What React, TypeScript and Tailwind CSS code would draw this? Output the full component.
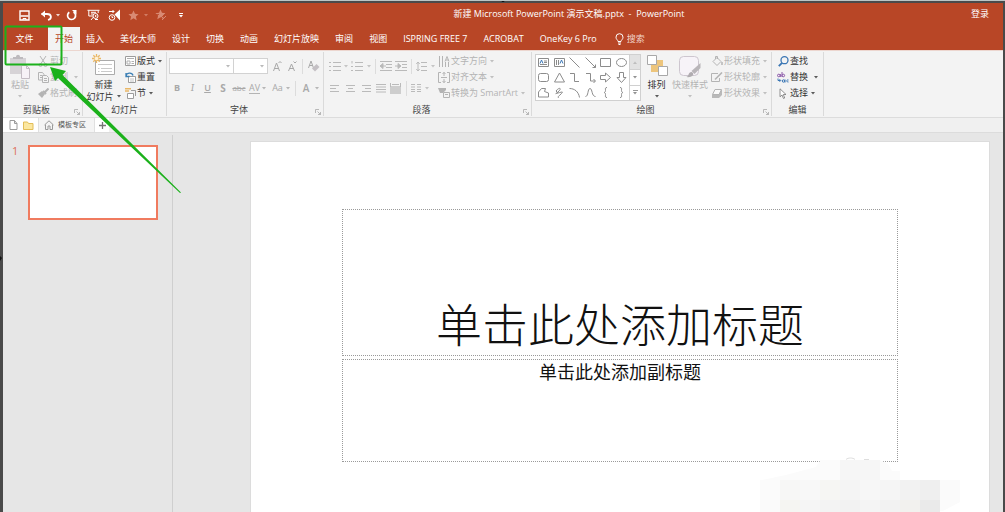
import type { ReactNode } from "react"

type IconProps = { w?: number; h?: number; className?: string; children: ReactNode }

function Icon({ w = 12, h = 12, className = "", children }: IconProps) {
  return (
    <svg
      width={w}
      height={h}
      viewBox={`0 0 ${w} ${h}`}
      fill="none"
      stroke="currentColor"
      className={`shrink-0 ${className}`}
      aria-hidden="true"
    >
      {children}
    </svg>
  )
}

function Caret({ className = "" }: { className?: string }) {
  return (
    <svg width="4" height="3" viewBox="0 0 4 3" className={`shrink-0 opacity-80 ${className}`} aria-hidden="true">
      <path d="M0 0h4L2 2.6z" fill="currentColor" />
    </svg>
  )
}

function Launcher() {
  return (
    <button aria-label="更多选项" className="absolute right-[2px] bottom-px text-[#a8a8a8]">
      <Icon w={6} h={6}>
        <path d="M.5 4V.5H4M2.500 2.500l3 3M5.500 3v2.500H3" strokeWidth="0.8" />
      </Icon>
    </button>
  )
}

type GroupProps = { label: string; className: string; launcher?: boolean; children: ReactNode }

function Group({ label, className, launcher = false, children }: GroupProps) {
  return (
    <section
      aria-label={label}
      className={`relative flex shrink-0 flex-col border-r border-[#dadada] ${className}`}
    >
      <div className="flex h-[52px]">{children}</div>
      <div className="text-center leading-3 text-[#444]">{label}</div>
      {launcher && <Launcher />}
    </section>
  )
}

type RowProps = { icon: ReactNode; label: string; caret?: boolean; disabled?: boolean; gap?: string }

function RowButton({ icon, label, caret = false, disabled = false, gap = "ml-[3px]" }: RowProps) {
  return (
    <button
      className={`flex h-4 items-center whitespace-nowrap ${disabled ? "text-[#b4b4b4]" : "text-[#333]"}`}
    >
      <span className="mr-px flex w-3 justify-center">{icon}</span>
      {label}
      {caret && <Caret className={gap} />}
    </button>
  )
}

function Tool({ label, className = "", children }: { label: string; className?: string; children: ReactNode }) {
  return (
    <button aria-label={label} className={`flex h-4 items-center justify-center ${className}`}>
      {children}
    </button>
  )
}

function Divider() {
  return <span className="block h-[15px] w-px shrink-0 bg-[#dcdcdc]" />
}

const tabs = [
  "插入",
  "美化大师",
  "设计",
  "切换",
  "动画",
  "幻灯片放映",
  "审阅",
  "视图",
  "ISPRING FREE 7",
  "ACROBAT",
  "OneKey 6 Pro",
]

const starPath = "M5.500 .5l1.500 3.300 3.600.4-2.700 2.400.8 3.600-3.200-1.900-3.200 1.900.8-3.600L.4 4.200 4 3.800z"

function TitleBar() {
  return (
    <div className="relative flex h-6 items-center pl-4 text-white">
      <Tool label="保存">
        <Icon w={11} h={11}>
          <path d="M1 1h9v9H1z" strokeWidth="1.400" />
          <path d="M1.500 6h8" strokeWidth="1.500" />
          <path d="M4 10V8.500h3V10" />
        </Icon>
      </Tool>
      <Tool label="撤消" className="ml-[10px] gap-1">
        <Icon w={12} h={11}>
          <path d="M1.500 4H7c5 0 5 5 1 6" strokeWidth="1.800" />
          <path d="M5 .5L1 4l4 3.500z" fill="currentColor" stroke="none" />
        </Icon>
        <Caret />
      </Tool>
      <Tool label="重复" className="ml-[6px]">
        <Icon w={11} h={11}>
          <path d="M7.500 2A4 4 0 1 1 3.300 2.200" strokeWidth="1.700" />
          <path d="M6 0h4.500v4.500z" fill="currentColor" stroke="none" />
        </Icon>
      </Tool>
      <Tool label="从头开始" className="ml-[10px]">
        <Icon w={13} h={12}>
          <path d="M.5 1.300h12M1.800 1.500v5.500h4M11.200 1.500v2.500M4 3.300h5M4 5h2.500M4 11l2.500-3M8 10.500h3" />
          <circle cx="8.500" cy="7" r="2.500" />
          <path d="M8 5.800l1.800 1.200L8 8.200z" fill="currentColor" stroke="none" />
        </Icon>
      </Tool>
      <Tool label="排练计时" className="ml-2">
        <Icon w={13} h={12}>
          <circle cx="4" cy="8.500" r="2.800" />
          <path d="M4 7v1.500h1.200M1 2.500h5M4.500 1L6 2.500 4.500 4" />
          <path d="M6.500 5.500l5.500-5v11z" fill="currentColor" stroke="none" />
        </Icon>
      </Tool>
      <Tool label="添加动画" className="ml-[7px] gap-[5px] text-[#d98a73]">
        <Icon w={11} h={11}>
          <path d={starPath} fill="currentColor" stroke="none" />
        </Icon>
        <Caret />
      </Tool>
      <Tool label="动画效果" className="ml-[7px] text-[#d98a73]">
        <Icon w={12} h={12}>
          <path d={starPath} fill="currentColor" stroke="none" />
          <path d="M1 5.500h3M6 9l5-5" strokeWidth="0.8" stroke="#b84626" />
          <path d="M7 11l4-4" />
        </Icon>
      </Tool>
      <Tool label="自定义快速访问工具栏" className="ml-3">
        <Icon w={4} h={5}>
          <path d="M0 .5h4" />
          <path d="M0 2h4L2 4.500z" fill="currentColor" stroke="none" />
        </Icon>
      </Tool>
      <h1 className="pointer-events-none absolute inset-x-0 bottom-[7px] pl-[132px] text-center whitespace-pre">
        新建 Microsoft PowerPoint 演示文稿.pptx  -  PowerPoint
      </h1>
      <button className="absolute right-[14px] bottom-[7px]">登录</button>
    </div>
  )
}

function TabBar() {
  return (
    <nav className="flex h-[23px] items-center whitespace-nowrap text-white">
      <button className="h-full w-[45px] pr-[2px]">文件</button>
      <button className="h-full bg-[#f3f3f3] px-[7px] text-[#b84626]">开始</button>
      <div className="-ml-[2px] flex h-full">
        {tabs.map((tab) => (
          <button key={tab} className="h-full px-2">
            {tab}
          </button>
        ))}
      </div>
      <label className="ml-[10px] flex items-center gap-[3px]">
        <Icon w={9} h={12}>
          <path d="M3 8.500C3 7 1 6.500 1 4.200a3.500 3.500 0 0 1 7 0C8 6.500 6 7 6 8.500zM3 10h3M3.500 11.500h2" />
        </Icon>
        <input
          aria-label="搜索"
          placeholder="搜索"
          className="w-16 bg-transparent outline-none placeholder:text-[#f0d3ca]"
        />
      </label>
    </nav>
  )
}

function ClipboardGroup() {
  return (
    <Group label="剪贴板" className="w-20 pr-3" launcher>
      <button className="flex w-[34px] shrink-0 flex-col items-center text-[#b4b4b4]">
        <Icon w={20} h={25} className="mt-[2px]">
          <path d="M0 4h16v7h-5v9H0z" fill="#d6d3d6" stroke="none" />
          <path d="M3 5V3h3c0-3 4-3 4 0h3v2z" fill="#bdbabd" stroke="none" />
          <path d="M11.500 11.500h5l3 3v10h-8zM16.500 11.500v3h3" fill="#f7f2f7" stroke="#c4bcc4" />
        </Icon>
        <span className="leading-3">粘贴</span>
        <Caret className="mt-1" />
      </button>
      <div className="shrink-0 pt-px">
        <RowButton
          disabled
          label="剪切"
          icon={
            <Icon w={10} h={11}>
              <path d="M2 0l5 7.500M8 0L3 7.500" />
              <circle cx="2.500" cy="9" r="1.500" />
              <circle cx="7.500" cy="9" r="1.500" />
            </Icon>
          }
        />
        <RowButton
          disabled
          caret
          label="复制"
          gap="ml-[6px]"
          icon={
            <Icon w={11} h={11}>
              <path d="M.5.5h4l1.500 2v5.500H.5zM2 3.500h2M2 5.500h2" />
              <path d="M4.500 3.500h4l2 2v5h-6zM6 6.500h3M6 8.500h3" fill="#f3f3f3" />
            </Icon>
          }
        />
        <RowButton
          disabled
          label="格式刷"
          icon={
            <Icon w={11} h={10}>
              <path d="M0 6l4-3 3 3-3 4z" fill="currentColor" stroke="none" />
              <path d="M5 3l3 3M7 4l3.500-3.500" strokeWidth="2" />
            </Icon>
          }
        />
      </div>
    </Group>
  )
}

function SlidesGroup() {
  return (
    <Group label="幻灯片" className="w-[84px]">
      <button className="flex w-[41px] shrink-0 flex-col items-center text-[#333]">
        <Icon w={24} h={25} className="mt-[2px]">
          <path d="M3.500 6.500h19v14h-19z" fill="#fff" stroke="#ababab" />
          <path d="M6 10.500h14M6 14.500h1.500M9 14.500h11M6 17.500h1.500M9 17.500h11" stroke="#cacaca" />
          <path d="M4.500 0v9M0 4.500h9M1.300 1.300l6.400 6.400M7.700 1.300L1.300 7.700" stroke="#eab765" strokeWidth="1.300" />
          <circle cx="4.500" cy="4.500" r="1.800" fill="#fff3d8" stroke="none" />
        </Icon>
        <span className="leading-3">新建</span>
        <span className="flex items-center gap-[3px] leading-[11px] whitespace-nowrap">
          幻灯片
          <Caret />
        </span>
      </button>
      <div className="shrink-0 pt-px">
        <RowButton
          caret
          label="版式"
          icon={
            <Icon w={11} h={10}>
              <path d="M.5.500h10v9H.500z" fill="#fff" stroke="#9c9c9c" />
              <path d="M2 2.500h7M2 5h3v3H2zM6.500 5.500H9M6.500 7.500H9" stroke="#b0b0b0" />
            </Icon>
          }
        />
        <RowButton
          label="重置"
          icon={
            <Icon w={11} h={11}>
              <path d="M3.500 4.500h7v6h-7z" fill="#fff" stroke="#9c9c9c" />
              <path d="M5 7h4M5 9h4" stroke="#c4c4c4" />
              <path d="M1 4.500c0-4 6-4.500 7-1M1 1v3.500h3.500" stroke="#3a7fb5" strokeWidth="1.300" />
            </Icon>
          }
        />
        <RowButton
          caret
          label="节"
          icon={
            <Icon w={11} h={11}>
              <path d="M0 .8h6M0 3h4" stroke="#eab765" strokeWidth="1.500" />
              <path d="M2.500 5.500h6v5h-6z" fill="#fff" stroke="#9c9c9c" />
              <path d="M6 2.500h4.500V8" stroke="#9c9c9c" />
            </Icon>
          }
        />
      </div>
    </Group>
  )
}

function FontGroup() {
  return (
    <Group label="字体" className="w-[157px] pr-3" launcher>
      <div className="flex w-[154px] shrink-0 flex-col text-[#a8a8a8]">
        <div className="mt-[6px] flex h-4 items-center pl-[2px]">
          {["字体名称", "字号"].map((name, i) => (
            <span
              key={name}
              className={`relative flex h-4 items-center border border-[#d2d2d2] bg-white ${i ? "-ml-px w-9" : "w-[66px]"}`}
            >
              <select aria-label={name} className="h-full w-full appearance-none bg-transparent outline-none" />
              <Caret className="pointer-events-none absolute right-[3px]" />
            </span>
          ))}
          <Tool label="增大字号" className="ml-1 w-3">
            <Icon w={9} h={11}>
              <path d="M.5 10l3-8 3 8M1.500 7.500h4" />
              <path d="M5.500 2L7 .5 8.500 2" />
            </Icon>
          </Tool>
          <Tool label="减小字号" className="ml-[3px] w-3">
            <Icon w={9} h={11}>
              <path d="M.5 10l3-7 3 7M1.500 7.500h4" />
              <path d="M5.500 .5L7 2 8.500 .5" />
            </Icon>
          </Tool>
          <span className="ml-1">
            <Divider />
          </span>
          <Tool label="清除格式" className="ml-1 w-[14px]">
            <Icon w={12} h={12}>
              <path d="M.5 8l2.500-7 2.500 7M1.500 5.500h3" />
              <path d="M4 8.500L8.500 4l3 3L7 11.500z" fill="#c4c0c4" stroke="none" />
            </Icon>
          </Tool>
        </div>
        <div className="mt-[6px] flex h-4 items-center pl-[3px]">
          <Tool label="加粗" className="w-[14px] font-bold">B</Tool>
          <Tool label="倾斜" className="ml-px w-[15px] font-serif text-[10px] italic">I</Tool>
          <Tool label="下划线" className="w-[15px] font-semibold underline">U</Tool>
          <Tool label="文字阴影" className="w-4 text-[10px] font-bold">S</Tool>
          <Tool label="删除线" className="w-4 text-[8px] line-through">abc</Tool>
          <Tool label="字符间距" className="w-[21px] gap-[2px]">
            <span className="border-b border-[#b4b4b4] leading-[10px]">AV</span>
            <Caret />
          </Tool>
          <Tool label="更改大小写" className="ml-[3px] w-5 gap-[3px]">
            Aa
            <Caret />
          </Tool>
          <span className="ml-1">
            <Divider />
          </span>
          <Tool label="字体颜色" className="ml-[5px] w-5 gap-[6px] text-[10px] font-semibold">
            A
            <Caret />
          </Tool>
        </div>
      </div>
    </Group>
  )
}

function ParagraphGroup() {
  return (
    <Group label="段落" className="w-[208px] pr-3" launcher>
      <div className="flex w-[114px] shrink-0 flex-col pl-[5px] text-[#bababa]">
        <div className="mt-[6px] flex h-4 items-center">
          <Tool label="项目符号" className="gap-[3px]">
            <Icon w={12} h={10}>
              <path d="M0 1.500h2M0 5.500h2M0 9.500h2M4 1.500h8M4 5.500h8M4 9.500h8" />
            </Icon>
            <Caret />
          </Tool>
          <Tool label="编号" className="ml-[3px] gap-[4px]">
            <Icon w={12} h={10}>
              <path d="M1 0v2.500M0 5.500h2M0 9.500h2M4 1.500h8M4 5.500h8M4 9.500h8" />
            </Icon>
            <Caret />
          </Tool>
          <span className="ml-1">
            <Divider />
          </span>
          <Tool label="降低列表级别" className="ml-1">
            <Icon w={12} h={10}>
              <path d="M0 .5h12M6 3.500h6M6 6.500h6M0 9.500h12M1 5h5" />
              <path d="M0 5l3-2.500v5z" fill="currentColor" />
            </Icon>
          </Tool>
          <Tool label="提高列表级别" className="ml-[3px]">
            <Icon w={12} h={10}>
              <path d="M0 .5h12M7 3.500h5M7 6.500h5M0 9.500h12M0 5h4" />
              <path d="M6 5L3 2.500v5z" fill="currentColor" />
            </Icon>
          </Tool>
          <span className="ml-1">
            <Divider />
          </span>
          <Tool label="行距" className="ml-1 gap-1">
            <Icon w={11} h={11}>
              <path d="M5 1.500h6M5 5.500h6M5 9.500h6M2 1v9M.3 3L2 1l1.700 2M.3 8L2 10l1.700-2" />
            </Icon>
            <Caret />
          </Tool>
        </div>
        <div className="mt-[6px] flex h-4 items-center">
          <Tool label="左对齐" className="w-[11px]">
            <Icon w={9} h={7}>
              <path d="M0 .5h9M0 3.500h6M0 6.500h9" />
            </Icon>
          </Tool>
          <Tool label="居中" className="ml-[5px] w-[11px]">
            <Icon w={9} h={7}>
              <path d="M0 .5h9M2 3.500h5M0 6.500h9" />
            </Icon>
          </Tool>
          <Tool label="右对齐" className="ml-[5px] w-[11px]">
            <Icon w={9} h={7}>
              <path d="M0 .5h9M3 3.500h6M0 6.500h9" />
            </Icon>
          </Tool>
          <Tool label="两端对齐" className="ml-[3px] w-[11px]">
            <Icon w={10} h={9}>
              <path d="M0 .5h10M0 3h10M0 5.500h10M0 8h10" />
            </Icon>
          </Tool>
          <Tool label="分散对齐" className="ml-[4px] w-[11px]">
            <Icon w={11} h={11}>
              <path d="M0 3h11v8H0z" fill="#cdcdcd" stroke="none" />
              <path d="M.5 0v4M10.500 0v4M2 1.500h7" />
            </Icon>
          </Tool>
          <span className="ml-[5px]">
            <Divider />
          </span>
          <Tool label="分栏" className="ml-1 gap-1">
            <Icon w={10} h={8}>
              <path d="M0 .5h4M0 3h4M0 5.500h4M0 7.500h4M6 .5h4M6 3h4M6 5.500h4M6 7.500h4" />
            </Icon>
            <Caret />
          </Tool>
        </div>
      </div>
      <div className="shrink-0 pt-px">
        <RowButton
          disabled
          caret
          label="文字方向"
          icon={
            <Icon w={11} h={11}>
              <path d="M.5 0v11M3.500 0v11M6.500 6v5M9.500 6v5M6 5.500l2-5 2 5M7 4h2.500" />
            </Icon>
          }
        />
        <RowButton
          disabled
          caret
          label="对齐文本"
          icon={
            <Icon w={12} h={11}>
              <path d="M3 .5H.5v10H3M9 .5h2.500v10H9M3 5.500h6M6 0v4M6 7v4M4.500 2L6 .5 7.500 2M4.500 9L6 10.500 7.500 9" />
            </Icon>
          }
        />
        <RowButton
          disabled
          caret
          label="转换为 SmartArt"
          icon={
            <Icon w={12} h={10}>
              <path d="M0 0h8v2l-3 3H2z" fill="currentColor" stroke="none" />
              <path d="M5.500 4.500h6v5h-6zM7 6.500h3" fill="#f3f3f3" />
            </Icon>
          }
        />
      </div>
    </Group>
  )
}

const shapes: { name: string; art: ReactNode }[] = [
  {
    name: "文本框",
    art: (
      <>
        <path d="M.5 1.500h10v8H.5zM2 7.500h7M6 4h3M6 5.500h3" />
        <path d="M2 6.500L3.500 3 5 6.500" stroke="#3f7ab8" />
      </>
    ),
  },
  {
    name: "竖排文本框",
    art: (
      <>
        <path d="M.5 1.500h10v8H.5zM2.500 3v5M4.500 3v5" />
        <path d="M6 6.500L7.500 3 9 6.500" stroke="#3f7ab8" />
      </>
    ),
  },
  { name: "直线", art: <path d="M.5 .5l10 10" /> },
  { name: "箭头", art: <path d="M.5 .5l10 10M10.500 7.500v3h-3" /> },
  { name: "矩形", art: <path d="M.5 1.500h10v8H.5z" /> },
  { name: "椭圆", art: <ellipse cx="5.500" cy="5.500" rx="5" ry="4" /> },
  { name: "圆角矩形", art: <rect x=".5" y="1.500" width="10" height="8" rx="2" /> },
  { name: "等腰三角形", art: <path d="M5.500 1l5 9H.5z" /> },
  { name: "肘形连接符", art: <path d="M1 1.500h4.500v8H10" /> },
  { name: "肘形箭头", art: <path d="M1 1.500h4.500v7.500H10M8.500 7L10.500 9l-2 2" /> },
  { name: "右箭头", art: <path d="M.5 3.500h5v-2.500l5 4.500-5 4.500V7.500h-5z" /> },
  { name: "下箭头", art: <path d="M3.500 .5h4v5h2.500L5.500 10.500 1 5.500h2.500z" /> },
  { name: "任意多边形", art: <path d="M.5 10V5l3-3.500h4L6.500 4.500l4 1.500v4z" /> },
  { name: "自由曲线", art: <path d="M2 4c3-4 6-3 3 0s-5 3-1 2 6-2 3 1-4 3-2 4M2 4l2 2" /> },
  { name: "弧形", art: <path d="M.5 1.500c5 0 9 3 10 9" /> },
  { name: "曲线", art: <path d="M.5 9.500c3 0 2-8 4.500-8s1.500 8 5.500 8" /> },
  { name: "左大括号", art: <path d="M7 .5c-2 0-1.500 1-1.500 3S4 5.500 4 5.500s1.500 0 1.500 2-.5 3 1.500 3" /> },
  { name: "右大括号", art: <path d="M4 .5c2 0 1.500 1 1.500 3S7 5.500 7 5.500s-1.500 0-1.500 2 .5 3-1.500 3" /> },
]

function DrawingGroup() {
  return (
    <Group label="绘图" className="w-[240px] pr-3" launcher>
      <div className="mt-[2px] ml-[3px] flex h-[47px] shrink-0 border border-[#d0d0d0] bg-white">
        <div className="grid w-[93px] grid-cols-6 grid-rows-3">
          {shapes.map((shape) => (
            <button
              key={shape.name}
              aria-label={shape.name}
              className="flex items-center justify-center text-[#8c8c8c]"
            >
              <Icon w={11} h={11}>
                {shape.art}
              </Icon>
            </button>
          ))}
        </div>
        <div className="flex w-[11px] flex-col divide-y divide-[#d0d0d0] border-l border-[#d0d0d0] text-[#777]">
          <button aria-label="上一行" className="flex flex-1 items-center justify-center bg-[#e2e2e2] text-[#b5b5b5]">
            <Caret className="rotate-180" />
          </button>
          <button aria-label="下一行" className="flex flex-1 items-center justify-center">
            <Caret />
          </button>
          <button aria-label="其他形状" className="flex flex-1 flex-col items-center justify-center gap-px">
            <span className="h-px w-[5px] bg-[#999]" />
            <Caret />
          </button>
        </div>
      </div>
      <button className="ml-[3px] flex w-[25px] shrink-0 flex-col items-center text-[#333]">
        <Icon w={22} h={24} className="mt-[3px]">
          <path d="M5 5h12v12H5z" fill="#edc57c" stroke="none" />
          <path d="M1.500 .5h9v9h-9zM12.500 11.500h9v9h-9z" fill="#fff" stroke="#a8a8a8" />
        </Icon>
        <span className="leading-3">排列</span>
        <Caret className="mt-1" />
      </button>
      <button className="ml-[2px] flex w-[38px] shrink-0 flex-col items-center whitespace-nowrap text-[#b4b4b4]">
        <Icon w={24} h={24} className="mt-[3px]">
          <rect x="1.500" y="1.500" width="19" height="19" rx="4" fill="#f7f3f8" stroke="#cdc6cf" />
          <path d="M22.500 8v5l-6 6-3-3z" fill="#b9b5b9" stroke="none" />
          <path d="M8 22c3 0 2-5 5.500-5 3.500 1 2 6-5.500 5z" fill="#b0acb0" stroke="none" />
        </Icon>
        <span className="leading-3">快速样式</span>
        <Caret className="mt-1" />
      </button>
      <div className="ml-[2px] shrink-0 pt-px">
        <RowButton
          disabled
          caret
          label="形状填充"
          icon={
            <Icon w={11} h={11}>
              <path d="M5 1.500l4 4-4 4-4-4zM3.500 3V.5h2V3" />
              <path d="M10 6v3" strokeWidth="1.500" />
            </Icon>
          }
        />
        <RowButton
          disabled
          caret
          label="形状轮廓"
          icon={
            <Icon w={12} h={11}>
              <path d="M7 1.500H.5v8h8V6" />
              <path d="M4 7.500l7-7" strokeWidth="1.600" />
            </Icon>
          }
        />
        <RowButton
          disabled
          caret
          label="形状效果"
          icon={
            <Icon w={12} h={11}>
              <path d="M4 2h7v5l-3 3H1V7z" fill="#b9b9b9" stroke="none" />
              <path d="M4 1.500h6.500L8 6.500H1.500z" fill="#fafafa" />
            </Icon>
          }
        />
      </div>
    </Group>
  )
}

function EditingGroup() {
  return (
    <Group label="编辑" className="w-[52px]">
      <div className="shrink-0 pt-px pl-[5px]">
        <RowButton
          label="查找"
          icon={
            <Icon w={11} h={11}>
              <circle cx="6.500" cy="4.200" r="3.500" stroke="#3a76b4" strokeWidth="1.300" />
              <path d="M4 6.800L.8 10.200" stroke="#3a76b4" strokeWidth="1.800" />
            </Icon>
          }
        />
        <RowButton
          caret
          gap="ml-[6px]"
          label="替换"
          icon={
            <Icon w={12} h={11}>
              <path d="M.5 3.500a1.300 1.300 0 1 0 2.600 0a1.300 1.300 0 1 0-2.600 0M3.300 2v3M5 0v5M5 3.500a1.300 1.300 0 1 0 2.600 0a1.300 1.300 0 1 0-2.600 0" stroke="#8a56a8" />
              <path d="M1 6.500v2h2.500M2.500 7.200l1.300 1.300-1.300 1.300" stroke="#3a76b4" />
              <path d="M5.300 9a1.200 1.200 0 1 0 2.400 0a1.200 1.200 0 1 0-2.400 0M8 7.500v3M11.500 8c-2-1-2.500 2.500 0 2" stroke="#3a76b4" />
            </Icon>
          }
        />
        <RowButton
          caret
          label="选择"
          icon={
            <Icon w={8} h={11}>
              <path d="M1 .8v8l2-1.800 1.500 3.500 1.200-.5L4.300 6.500H7z" fill="#fff" stroke="#777" strokeWidth="0.800" />
            </Icon>
          }
        />
      </div>
    </Group>
  )
}

function DocumentStrip() {
  return (
    <div className="flex h-[15px] shrink-0 items-stretch border-b border-[#dcdcdc] bg-[#f0f0f0] text-[7px]">
      <div className="flex w-9 items-center gap-[5px] border-r border-[#e0e0e0] bg-white pl-[6px] text-[#9a9a9a]">
        <Tool label="新建">
          <Icon w={9} h={10}>
            <path d="M1 .5h4.500l2.500 3v6H1zM5.500 .5v3H8" />
          </Icon>
        </Tool>
        <Tool label="打开">
          <Icon w={11} h={10}>
            <path d="M.5 2h4l1 1.500h4.500v6H.5z" fill="#fbe7a0" stroke="#e2bd58" />
          </Icon>
        </Tool>
      </div>
      <button className="flex w-14 items-center gap-1 border-r border-[#e0e0e0] bg-[#f4f4f4] pl-[5px] text-[#555]">
        <Icon w={10} h={10} className="text-[#9a9a9a]">
          <path d="M.5 5L5 .8 9.500 5M1.500 4.500v5h2.500V6h2v3.500h2.500v-5" />
        </Icon>
        模板专区
      </button>
      <Tool label="新建标签" className="h-full w-[14px] self-stretch bg-white text-[#777]">
        <Icon w={7} h={7}>
          <path d="M0 3.500h7M3.500 0v7" strokeWidth="1.300" />
        </Icon>
      </Tool>
    </div>
  )
}

// Blurred mosaic patch in the corner of the slide
const mosaic = [
  [820, 460, 20, "#fbfbfb"],
  [840, 460, 40, "#f6f6f6"],
  [760, 480, 20, "#fbfbfb"],
  [780, 480, 20, "#f7f7f6"],
  [800, 480, 20, "#f8f8f8"],
  [820, 480, 20, "#f6f6f3"],
  [840, 480, 20, "#f4f4f4"],
  [860, 480, 20, "#f7f7f7"],
  [880, 480, 20, "#f5f5f5"],
  [900, 480, 20, "#f2f2f2"],
  [920, 480, 20, "#efefef"],
  [940, 480, 20, "#fafafa"],
  [760, 500, 20, "#fafafa"],
  [780, 500, 20, "#f5f5f2"],
  [800, 500, 20, "#f5f5f5"],
  [820, 500, 20, "#f3f3f3"],
  [840, 500, 20, "#f2f2f2"],
  [860, 500, 20, "#f4f4f4"],
  [880, 500, 20, "#f2f2f2"],
  [900, 500, 20, "#f2f1ee"],
  [920, 500, 20, "#eaeaea"],
] as const

function Overlay() {
  return (
    <svg
      width="1005"
      height="512"
      viewBox="0 0 1005 512"
      className="pointer-events-none absolute -top-px left-0"
      aria-hidden="true"
    >
      <path d="M820 461l-4 6-30 8-24 5h58zM880 460l8 4 4 7h8v9h-20zM940 500h20v2l-17 9h-3z" fill="#fbfbfb" />
      {mosaic.map(([x, y, w, fill]) => (
        <rect key={`${x}-${y}`} x={x} y={y} width={w} height="20" fill={fill} />
      ))}
      <path d="M846 459.500c2-2 7-2 9 0M864 459.500h5" stroke="#dedede" fill="none" />
      <rect x="5.500" y="26.500" width="56" height="38" rx="1" fill="none" stroke="#1bb11b" strokeWidth="2" />
      <path d="M50 67l16 4-3.500 4L181 192.500l-1 .5L58 78l-3 3z" fill="#1bb11b" />
      <path d="M501 0h4l-1 2h-2zM0 256l2 2-2 3z" fill="#111" />
    </svg>
  )
}

export default function App() {
  return (
    <div className="relative flex h-screen flex-col overflow-hidden border-t border-[#bcc5c5] bg-[#e6e6e6] font-['Open_Sans','Noto_Sans_CJK_SC',sans-serif] text-[9px] leading-3">
      <div className="flex min-h-0 flex-1 flex-col border-t-2 border-r-2 border-l-[3px] border-[#4a4a4a]">
        <header className="shrink-0 bg-[#b84626]">
          <TitleBar />
          <TabBar />
        </header>
        <div className="flex h-[68px] shrink-0 border-t border-b border-t-[#ecd6cf] border-b-[#dcdcdc] bg-[#f3f3f3] pt-px pb-px">
          <ClipboardGroup />
          <SlidesGroup />
          <FontGroup />
          <ParagraphGroup />
          <DrawingGroup />
          <EditingGroup />
        </div>
        <DocumentStrip />
        <div className="flex min-h-0 flex-1">
          <aside className="mt-[2px] flex w-[170px] shrink-0 items-start border-r border-[#cfcfcf] pt-[10px] pl-[9px]">
            <span className="w-4 text-[11px] leading-3 text-[#dd6f58]">1</span>
            <button aria-label="幻灯片 1" className="h-[75px] w-[130px] border-2 border-[#f07b5f] bg-white" />
          </aside>
          <main className="flex min-w-0 flex-1 pt-2 pr-[13px] pl-[77px]">
            <article className="min-w-0 flex-1 border border-b-0 border-[#dcdcdc] bg-white px-[91px] pt-[67px] text-[#111]">
              <div className="flex h-[147px] items-end justify-center border border-dotted border-[#9a9a9a] pb-[2px]">
                <h2 className="text-[46px] leading-[58px] font-light whitespace-nowrap">单击此处添加标题</h2>
              </div>
              <div className="mt-[3px] h-[103px] border border-dotted border-[#9a9a9a] text-center">
                <p className="text-[18px] leading-6">单击此处添加副标题</p>
              </div>
            </article>
          </main>
        </div>
      </div>
      <Overlay />
    </div>
  )
}
